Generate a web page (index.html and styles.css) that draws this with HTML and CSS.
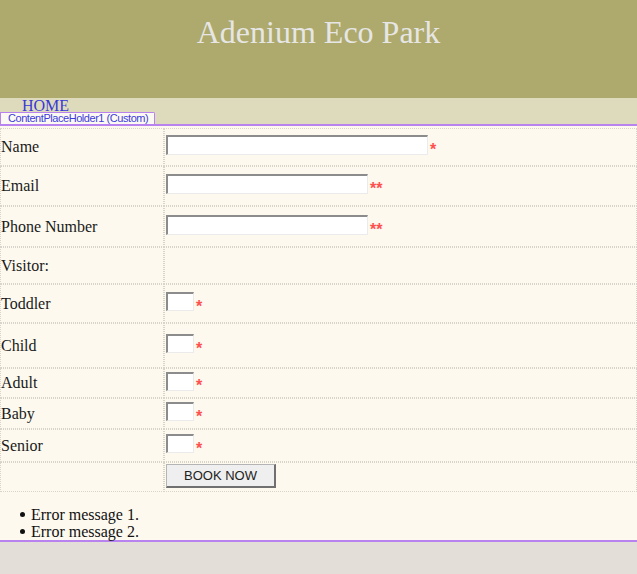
FILE: index.html
```html
<!DOCTYPE html>
<html>
<head>
<meta charset="utf-8">
<title>Adenium Eco Park</title>
<link rel="stylesheet" href="styles.css">
</head>
<body>
<div class="header"><h1 class="title">Adenium Eco Park</h1></div>
<div class="nav">
  <a class="home" href="#">HOME</a>
  <div class="tab">ContentPlaceHolder1 (Custom)</div>
</div>
<div class="content">
  <table class="form">
    <tr class="r-name"><td class="lbl">Name</td><td class="fld"><input class="txt wide" type="text"><span class="req">*</span></td></tr>
    <tr class="r-email"><td class="lbl">Email</td><td class="fld"><input class="txt mid" type="text"><span class="req">**</span></td></tr>
    <tr class="r-phone"><td class="lbl">Phone Number</td><td class="fld"><input class="txt mid" type="text"><span class="req">**</span></td></tr>
    <tr class="r-visitor"><td class="lbl">Visitor:</td><td class="fld"></td></tr>
    <tr class="r-toddler"><td class="lbl">Toddler</td><td class="fld"><input class="txt small" type="text"><span class="req">*</span></td></tr>
    <tr class="r-child"><td class="lbl">Child</td><td class="fld"><input class="txt small" type="text"><span class="req">*</span></td></tr>
    <tr class="r-adult"><td class="lbl">Adult</td><td class="fld"><input class="txt small" type="text"><span class="req">*</span></td></tr>
    <tr class="r-baby"><td class="lbl">Baby</td><td class="fld"><input class="txt small" type="text"><span class="req">*</span></td></tr>
    <tr class="r-senior"><td class="lbl">Senior</td><td class="fld"><input class="txt small" type="text"><span class="req">*</span></td></tr>
    <tr class="r-btn"><td class="lbl"></td><td class="fld"><button class="book" type="button">BOOK NOW</button></td></tr>
  </table>
  <ul class="errors">
    <li>Error message 1.</li>
    <li>Error message 2.</li>
  </ul>
</div>
</body>
</html>
```
FILE: styles.css
```css
html, body {
  margin: 0;
  padding: 0;
}
body {
  background: #e3dfd8;
  font-family: "Liberation Serif", "Times New Roman", serif;
  font-size: 16px;
  color: #1a1a1a;
}
.header {
  height: 98px;
  background: #aea96c;
  text-align: center;
  box-sizing: border-box;
  padding-top: 14px;
}
.title {
  margin: 0;
  font-weight: normal;
  font-size: 32px;
  color: #e6e6e4;
  font-family: "Liberation Serif", "Times New Roman", serif;
}
.nav {
  position: relative;
  height: 26px;
  background: #dddbbc;
  box-sizing: border-box;
  padding-top: 1px;
}
.home {
  display: inline-block;
  vertical-align: top;
  margin-left: 22px;
  color: #3838d8;
  text-decoration: none;
  font-size: 16px;
  line-height: 13px;
}
.tab {
  position: absolute;
  left: 0;
  bottom: 0;
  box-sizing: border-box;
  width: 155px;
  height: 12px;
  border: 1px solid #b883ee;
  border-bottom: none;
  border-top-right-radius: 2px;
  background: #fcf9f3;
  font-family: "Liberation Sans", Arial, sans-serif;
  font-size: 11px;
  letter-spacing: -0.45px;
  line-height: 11px;
  color: #3c3cdc;
  padding-left: 7px;
  white-space: nowrap;
  overflow: hidden;
}
.content {
  background: #fdf9ef;
  border-top: 2px solid #b883ee;
  border-bottom: 2px solid #b883ee;
  padding-top: 2px;
  padding-bottom: 0;
}
.form {
  width: 637px;
  border-spacing: 0;
  border-collapse: separate;
}
.form td {
  border: 1px dotted #d8d4cc;
  padding: 0;
  vertical-align: middle;
  box-sizing: border-box;
}
.lbl {
  width: 164px;
  padding-left: 0;
}
.fld {
  padding-left: 1px !important;
  white-space: nowrap;
}
.r-name td { height: 38px; }
.r-email td { height: 40px; }
.r-phone td { height: 41px; }
.r-visitor td { height: 37px; }
.r-toddler td { height: 39px; }
.r-child td { height: 45px; }
.r-adult td { height: 30px; }
.r-baby td { height: 31px; }
.r-senior td { height: 33px; }
.r-btn td { height: 30px; }
.txt {
  box-sizing: border-box;
  margin: 0 0 4px 0;
  padding: 0;
  vertical-align: middle;
  background: #ffffff;
  border-top: 2px solid #8c8c8c;
  border-left: 2px solid #8c8c8c;
  border-right: 1px solid #ebebeb;
  border-bottom: 1px solid #ebebeb;
  height: 20px;
  outline: none;
}
.wide { width: 262px; }
.mid { width: 202px; }
.small { width: 28px; height: 19px; }
.req {
  display: inline-block;
  vertical-align: middle;
  color: #ff5050;
  font-family: "Liberation Sans", Arial, sans-serif;
  font-weight: bold;
  font-size: 16px;
  line-height: 10px;
  height: 10px;
  margin-left: 2px;
  padding-top: 6px;
}
.book {
  box-sizing: border-box;
  width: 110px;
  height: 24px;
  margin: 0 0 2px 0;
  padding: 0;
  background: #efefef;
  border-top: 1px solid #b4b4b4;
  border-left: 1px solid #b4b4b4;
  border-right: 2px solid #707070;
  border-bottom: 2px solid #707070;
  font-family: "Liberation Sans", Arial, sans-serif;
  font-size: 13px;
  color: #222;
  vertical-align: middle;
}
.errors {
  margin: 14px 0 0 0;
  padding-left: 31px;
  line-height: 17px;
  color: #111;
  list-style: none;
}
.errors li::before {
  content: "";
  display: inline-block;
  width: 5px;
  height: 5px;
  border-radius: 50%;
  background: #111;
  margin-left: -11px;
  margin-right: 6px;
  vertical-align: 3px;
}
```
